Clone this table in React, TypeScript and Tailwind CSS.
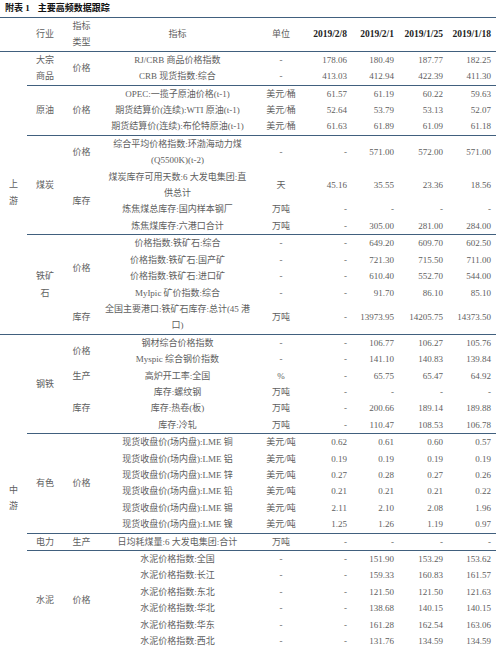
import React from "react";

type Row = { ind: string; unit: string; v: [string, string, string, string] };
type TypeGroup = { type: string; rows: Row[] };
type Industry = { name: string; types: TypeGroup[] };
type Stream = { name: string; industries: Industry[]; pad?: string };

const d = "-";
const data: Stream[] = [
  {
    name: "上\n游",
    industries: [
      {
        name: "大宗\n商品",
        types: [
          {
            type: "价格",
            rows: [
              { ind: "RJ/CRB 商品价格指数", unit: d, v: ["178.06", "180.49", "187.77", "182.25"] },
              { ind: "CRB 现货指数:综合", unit: d, v: ["413.03", "412.94", "422.39", "411.30"] },
            ],
          },
        ],
      },
      {
        name: "原油",
        types: [
          {
            type: "价格",
            rows: [
              { ind: "OPEC:一揽子原油价格(t-1)", unit: "美元/桶", v: ["61.57", "61.19", "60.22", "59.63"] },
              { ind: "期货结算价(连续):WTI 原油(t-1)", unit: "美元/桶", v: ["52.64", "53.79", "53.13", "52.07"] },
              { ind: "期货结算价(连续):布伦特原油(t-1)", unit: "美元/桶", v: ["61.63", "61.89", "61.09", "61.18"] },
            ],
          },
        ],
      },
      {
        name: "煤炭",
        types: [
          {
            type: "价格",
            rows: [{ ind: "综合平均价格指数:环渤海动力煤\n(Q5500K)(t-2)", unit: d, v: [d, "571.00", "572.00", "571.00"] }],
          },
          {
            type: "库存",
            rows: [
              { ind: "煤炭库存可用天数:6 大发电集团:直\n供总计", unit: "天", v: ["45.16", "35.55", "23.36", "18.56"] },
              { ind: "炼焦煤总库存:国内样本钢厂", unit: "万吨", v: [d, d, d, d] },
              { ind: "炼焦煤库存:六港口合计", unit: "万吨", v: [d, "305.00", "281.00", "284.00"] },
            ],
          },
        ],
      },
      {
        name: "铁矿\n石",
        types: [
          {
            type: "价格",
            rows: [
              { ind: "价格指数:铁矿石:综合", unit: d, v: [d, "649.20", "609.70", "602.50"] },
              { ind: "价格指数:铁矿石:国产矿", unit: d, v: [d, "721.30", "715.50", "711.00"] },
              { ind: "价格指数:铁矿石:进口矿", unit: d, v: [d, "610.40", "552.70", "544.00"] },
              { ind: "MyIpic 矿价指数:综合", unit: d, v: [d, "91.70", "86.10", "85.10"] },
            ],
          },
          {
            type: "库存",
            rows: [{ ind: "全国主要港口:铁矿石库存:总计(45 港\n口)", unit: "万吨", v: [d, "13973.95", "14205.75", "14373.50"] }],
          },
        ],
      },
    ],
  },
  {
    name: "中\n游",
    pad: "pt-[12px]",
    industries: [
      {
        name: "钢铁",
        types: [
          {
            type: "价格",
            rows: [
              { ind: "钢材综合价格指数", unit: d, v: [d, "106.77", "106.27", "105.76"] },
              { ind: "Myspic 综合钢价指数", unit: d, v: [d, "141.10", "140.83", "139.84"] },
            ],
          },
          { type: "生产", rows: [{ ind: "高炉开工率:全国", unit: "%", v: [d, "65.75", "65.47", "64.92"] }] },
          {
            type: "库存",
            rows: [
              { ind: "库存:螺纹钢", unit: "万吨", v: [d, d, d, d] },
              { ind: "库存:热卷(板)", unit: "万吨", v: [d, "200.66", "189.14", "189.88"] },
              { ind: "库存:冷轧", unit: "万吨", v: [d, "110.47", "108.53", "106.78"] },
            ],
          },
        ],
      },
      {
        name: "有色",
        types: [
          {
            type: "价格",
            rows: [
              { ind: "现货收盘价(场内盘):LME 铜", unit: "美元/吨", v: ["0.62", "0.61", "0.60", "0.57"] },
              { ind: "现货收盘价(场内盘):LME 铝", unit: "美元/吨", v: ["0.19", "0.19", "0.19", "0.19"] },
              { ind: "现货收盘价(场内盘):LME 锌", unit: "美元/吨", v: ["0.27", "0.28", "0.27", "0.26"] },
              { ind: "现货收盘价(场内盘):LME 铅", unit: "美元/吨", v: ["0.21", "0.21", "0.21", "0.22"] },
              { ind: "现货收盘价(场内盘):LME 锡", unit: "美元/吨", v: ["2.11", "2.10", "2.08", "1.96"] },
              { ind: "现货收盘价(场内盘):LME 镍", unit: "美元/吨", v: ["1.25", "1.26", "1.19", "0.97"] },
            ],
          },
        ],
      },
      {
        name: "电力",
        types: [{ type: "生产", rows: [{ ind: "日均耗煤量:6 大发电集团:合计", unit: "万吨", v: [d, d, d, d] }] }],
      },
      {
        name: "水泥",
        types: [
          {
            type: "价格",
            rows: [
              { ind: "水泥价格指数:全国", unit: d, v: [d, "151.90", "153.29", "153.62"] },
              { ind: "水泥价格指数:长江", unit: d, v: [d, "159.33", "160.83", "161.57"] },
              { ind: "水泥价格指数:东北", unit: d, v: [d, "121.50", "121.50", "121.63"] },
              { ind: "水泥价格指数:华北", unit: d, v: [d, "138.68", "140.15", "140.15"] },
              { ind: "水泥价格指数:华东", unit: d, v: [d, "161.28", "162.54", "163.06"] },
              { ind: "水泥价格指数:西北", unit: d, v: [d, "131.76", "134.59", "134.59"] },
            ],
          },
        ],
      },
    ],
  },
];

const pads = ["pr-[3px]", "pr-[4px]", "pr-[3px]", "pr-[5px]"];

function ML({ t }: { t: string }) {
  const parts = t.split("\n");
  return (
    <>
      {parts.map((p, i) => (
        <React.Fragment key={i}>
          {i > 0 && <br />}
          {p}
        </React.Fragment>
      ))}
    </>
  );
}

export default function App() {
  const rows: React.ReactNode[] = [];
  let key = 0;
  data.forEach((s) => {
    const sCount = s.industries.reduce((a, ind) => a + ind.types.reduce((b, t) => b + t.rows.length, 0), 0);
    s.industries.forEach((ind, ii) => {
      const iCount = ind.types.reduce((b, t) => b + t.rows.length, 0);
      ind.types.forEach((t, ti) => {
        t.rows.forEach((r, ri) => {
          const firstOfStream = ii === 0 && ti === 0 && ri === 0;
          const firstOfInd = ti === 0 && ri === 0;
          const bt = firstOfInd ? "border-t border-[#41607e]" : "";
          rows.push(
            <tr key={key++}>
              {firstOfStream && (
                <td rowSpan={sCount} className={`${bt} ${s.pad ?? ""} text-center align-middle`}>
                  <ML t={s.name} />
                </td>
              )}
              {firstOfInd && (
                <td rowSpan={iCount} className={`${bt} text-center align-middle`}>
                  <ML t={ind.name} />
                </td>
              )}
              {ri === 0 && (
                <td rowSpan={t.rows.length} className={`${bt} text-center align-middle`}>
                  {t.type}
                </td>
              )}
              <td className={`${bt} text-center align-middle whitespace-nowrap`}>
                <ML t={r.ind} />
              </td>
              <td className={`${bt} text-center align-middle whitespace-nowrap`}>{r.unit}</td>
              {r.v.map((v, vi) => (
                <td key={vi} className={`${bt} ${pads[vi]} text-right align-middle whitespace-nowrap`}>
                  {v}
                </td>
              ))}
            </tr>
          );
        });
      });
    });
  });

  return (
    <div className="w-[500px] h-[646px] overflow-hidden bg-white font-['Liberation_Serif','Noto_Sans_CJK_SC',serif] text-[9px] text-[#5e5e5e]">
      <div className="h-[17px] leading-[17px] pl-[5px] font-bold text-[#111111] flex">
        <span>附表 1</span>
        <span className="ml-[8px]">主要高频数据跟踪</span>
      </div>
      <table className="table-fixed border-collapse w-[496px] leading-[16.4px]">
        <colgroup>
          <col className="w-[27px]" />
          <col className="w-[36px]" />
          <col className="w-[37px]" />
          <col className="w-[155px]" />
          <col className="w-[52px]" />
          <col className="w-[43px]" />
          <col className="w-[48px]" />
          <col className="w-[48px]" />
          <col className="w-[50px]" />
        </colgroup>
        <thead>
          <tr>
            <td className="border-t border-b border-[#41607e]"></td>
            <td className="border-t border-b border-[#41607e] text-center align-middle">行业</td>
            <td className="border-t border-b border-[#41607e] text-center align-middle">
              指标
              <br />
              类型
            </td>
            <td className="border-t border-b border-[#41607e] text-center align-middle">指标</td>
            <td className="border-t border-b border-[#41607e] text-center align-middle">单位</td>
            {["2019/2/8", "2019/2/1", "2019/1/25", "2019/1/18"].map((h, i) => (
              <td
                key={h}
                className={`border-t border-b border-[#41607e] ${pads[i]} text-right align-middle font-bold text-[#222222] text-[9.5px] whitespace-nowrap`}
              >
                {h}
              </td>
            ))}
          </tr>
        </thead>
        <tbody>{rows}</tbody>
      </table>
    </div>
  );
}
